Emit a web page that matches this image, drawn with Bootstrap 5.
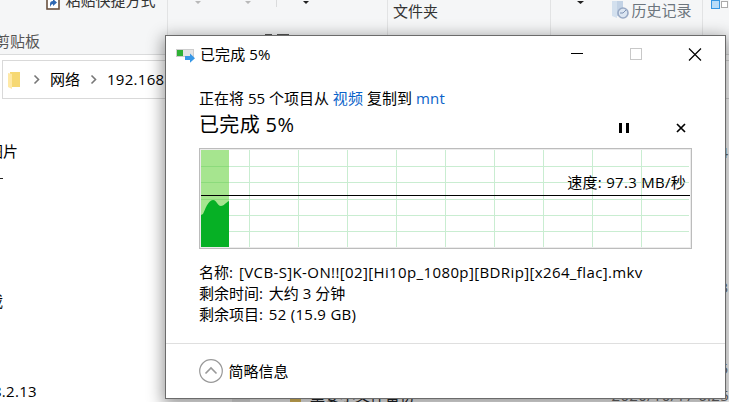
<!DOCTYPE html>
<html lang="zh-CN">
<head>
<meta charset="utf-8">
<meta name="viewport" content="width=device-width, initial-scale=1">
<title>已完成 5%</title>
<link href="https://cdn.jsdelivr.net/npm/bootstrap@5.3.0/dist/css/bootstrap.min.css" rel="stylesheet">
<style>
body{font-family:"Open Sans","Noto Sans CJK SC",sans-serif;font-size:15px;line-height:21px;color:#000;width:729px;height:402px;white-space:nowrap}
svg{display:block;flex-shrink:0}
.explorer{height:402px;background:#fff}
.ribbon{height:55px;background:#f5f6f7;border-bottom:1px solid #dadbdc;color:#333;flex-shrink:0}
.ribbon-group{border-right:1px solid #e2e3e4;flex-shrink:0;overflow:hidden}
.g-clip{width:168px}.g-org{width:220px}.g-new{width:163px}.g-open{width:152px}
.clip-row{margin:-10px 0 0 46px;height:21px}
.clip-name{margin:20px 0 0 -5px;color:#555}
.folder-name{margin:1px 0 0 5px}
.address{height:39px;margin:5px 0 0 2px;border:1px solid #d9d9d9;width:700px;flex-shrink:0}
.search{height:39px;margin:5px 0 0 8px;border:1px solid #d9d9d9;width:40px;flex-shrink:0}
.nav-pane{width:232px;overflow:hidden}
.scroll-strip{width:18px;background:#ececec}
.files{width:479px;padding-top:40px;margin-bottom:-8px}
.file-row{height:27px;line-height:27px;color:#6b6b6b;flex-shrink:0;padding-right:1px}
.file-last{padding-right:0}
.dialog-win{left:165px;top:35px;width:561px;height:364px;border:1px solid #6b6b6b;background:#fff;box-shadow:0 4px 15px 2px rgba(0,0,0,.42)}
.title-bar{height:38px;padding:0 23px 0 10px}
.title-bar .ttl{margin:-2px 0 0 5px;letter-spacing:.1px}
.body-pane{padding:14px 34px 0 33px;height:269px}
.lnk{color:#0a63c9}
.big{font-size:20px;line-height:28px;letter-spacing:.35px;padding-top:2px}
.chart{width:493px;height:101px;margin-top:9px}
.speed{right:6px;top:24px}
.details{margin-top:13px}
.foot{height:55px;border-top:1px solid #dfdfdf;padding-left:33px}
.lat{letter-spacing:.28px}
.fname{letter-spacing:.38px;margin-left:6px}
.value{margin-left:2px}
</style>
</head>
<body class="m-0 overflow-hidden position-relative">
<div class="explorer d-flex flex-column overflow-hidden">
  <div class="ribbon d-flex overflow-hidden">
    <div class="ribbon-group g-clip">
      <div class="clip-row d-flex align-items-center">
        <svg width="14" height="19" viewBox="0 0 14 19"><rect x="1" y="0" width="12" height="18" fill="#fff" stroke="#69513f" stroke-width="1.6"/><path d="M4 16v-3q0-3 3-3V8l4 3.500-4 3.500v-2q-2 0-3 3z" fill="#2f68b3"/></svg>
        <span class="ms-1">&#8202;粘贴快捷方式</span>
      </div>
      <div class="clip-name">剪贴板</div>
    </div>
    <div class="ribbon-group g-org">
      <svg width="219" height="55"><path d="M27 1h6l-3 3zM77 1h6l-3 3z" fill="#b9b9b9"/><path d="M135 1h6l-3 3z" fill="#222"/><path d="M108.500 0v7" stroke="#dadbdc"/><path d="M97 34.500h7M109 34.500h12" stroke="#555"/></svg>
    </div>
    <div class="ribbon-group g-new"><div class="folder-name">文件夹</div></div>
    <div class="ribbon-group g-open d-flex align-items-start">
      <svg width="59" height="10"><path d="M26 1h7l-3.500 3z" fill="#222"/></svg>
      <svg width="20" height="20" viewBox="0 0 20 20"><path d="M2 1h5v17l-5-2z" fill="#d3e0ee"/><path d="M7 1h6v15H7z" fill="#c2d2e5"/><circle cx="13" cy="13" r="5" fill="#dbe5f1" stroke="#98a9c5" stroke-width="1.600"/><path d="M13 13l3-3M13 13h-3" stroke="#7d91b3"/></svg>
      <span class="text-secondary">&#8202;历史记录</span>
    </div>
    <svg width="26" height="55"><rect x="8.500" y=".5" width="8" height="8" fill="#b8dcf8" stroke="#3597e4"/><rect x="18.500" y="1.500" width="6" height="6" fill="#fff" stroke="#aaa"/></svg>
  </div>
  <div class="d-flex">
    <div class="address d-flex align-items-center">
      <svg width="44" height="20" viewBox="0 0 44 20"><path d="M7 2h10v15H7z" fill="#f6d873"/><path d="M5 3l4 1v15l-4-2z" fill="#ffe9a6"/><path d="M31.500 5.500l4 4-4 4" fill="none" stroke="#777" stroke-width="1.600"/></svg>
      <span style="margin-left:3px">网络</span>
      <svg width="27" height="20" viewBox="0 0 27 20"><path d="M11.500 5.500l4 4-4 4" fill="none" stroke="#777" stroke-width="1.600"/></svg>
      <span class="lat">192.168.2.13</span>
    </div>
    <div class="search"></div>
  </div>
  <div class="d-flex flex-grow-1">
    <div class="nav-pane">
      <svg width="1" height="42"></svg>
      <div class="d-flex"><span style="margin-left:-12px">图片</span></div>
      <svg width="20" height="129"><path d="M0 16.500h3" stroke="#222"/></svg>
      <div class="d-flex"><span style="margin-left:-12px">载</span></div>
      <svg width="1" height="69"></svg>
      <div class="d-flex"><span class="lat" style="margin-left:-7px">8.2.13</span></div>
    </div>
    <div class="scroll-strip"></div>
    <div class="files">
      <div class="file-row text-end">4</div>
      <div class="file-row"></div>
      <div class="file-row text-end">1</div>
      <div class="file-row"></div>
      <div class="file-row"></div>
      <div class="file-row text-end">3</div>
      <div class="file-row text-end">1</div>
      <div class="file-row text-end">1</div>
      <div class="file-row text-end">5</div>
      <div class="file-row file-last d-flex">
        <svg width="60" height="27"><path d="M40 8h11v14H40z" fill="#ecc763"/></svg>
        <span class="text-dark">重要小文件备份</span>
        <span class="ms-auto lat">2020/10/17 6:25</span>
      </div>
    </div>
  </div>
</div>

<div class="dialog-win position-absolute">
  <div class="title-bar d-flex align-items-center">
    <svg width="19" height="16" viewBox="0 0 19 16"><rect x=".5" y="2.500" width="17" height="7" fill="#e4e4e4" stroke="#cdcdcd"/><rect x="1" y="3" width="6" height="6" fill="#2fb135"/><path d="M9 9h5V6.500l5 4.700-5 4.500V13H9z" fill="#3797e6"/></svg>
    <span class="ttl">已完成 5%</span>
    <svg class="ms-auto" width="132" height="14" viewBox="0 0 132 14"><path d="M1 5.500h12" stroke="#000"/><rect x="60.500" y=".5" width="11" height="11" fill="none" stroke="#c8c8c8"/><path d="M119 .5l12 12M131 .5l-12 12" stroke="#000" stroke-width="1.150"/></svg>
  </div>
  <div class="body-pane">
    <div>正在将 55 个项目从 <span class="lnk ms-0" style="letter-spacing:.15px">视频</span> 复制到 <span class="lnk lat">mnt</span></div>
    <div class="d-flex align-items-center big">
      <span>已完成 5%</span>
      <svg class="ms-auto" width="74" height="16" viewBox="0 0 74 16"><path d="M2 6h3v10H2zM9 6h3v10H9z"/><path d="M60 7l8 8M68 7l-8 8" stroke="#000" stroke-width="1.700"/></svg>
    </div>
    <div class="chart position-relative">
      <svg width="493" height="101" viewBox="0 0 493 101">
        <rect x=".5" y=".5" width="492" height="100" fill="#fff" stroke="#bcbcbc"/>
        <rect x="1.500" y="1.500" width="490" height="98" fill="none" stroke="#ececec"/>
        <path d="M2 18.500h488M2 34.500h488M2 51.500h488M2 67.500h488M2 83.500h488M50.500 2v97M99.500 2v97M148.500 2v97M197.500 2v97M246.500 2v97M295.500 2v97M344.500 2v97M393.500 2v97M442.500 2v97" stroke="#c9edd1"/>
        <path d="M2 2h28v97H2z" fill="#a6e58f"/>
        <path d="M2 18.500h28M2 34.500h28M2 51.500h28" stroke="#8cdb7c"/>
        <path d="M2 99V67l2-1c2-4 5-14 10-14 4 0 4 6 8 6 3 0 4-3 8-5v46z" fill="#06b025"/>
        <path d="M2 47.500h489" stroke="#000"/>
      </svg>
      <span class="speed position-absolute lat">速度: 97.3 MB/秒</span>
    </div>
    <div class="details">
      <div>名称:<span class="fname">[VCB-S]K-ON!![02][Hi10p_1080p][BDRip][x264_flac].mkv</span></div>
      <div>剩余时间: <span class="value">大约 3 分钟</span></div>
      <div>剩余项目: <span class="value lat">52 (15.9 GB)</span></div>
    </div>
  </div>
  <div class="foot d-flex align-items-center">
    <svg width="24" height="24" viewBox="0 0 24 24" fill="none"><circle cx="12" cy="12" r="11.300" stroke="#999" stroke-width="1.200"/><path d="M6.500 14.500L12 9l5.500 5.500" stroke="#999" stroke-width="1.600"/></svg>
    <span class="ms-1">&#8202;简略信息</span>
  </div>
</div>
<script src="https://cdn.jsdelivr.net/npm/bootstrap@5.3.0/dist/js/bootstrap.bundle.min.js"></script>
</body>
</html>
